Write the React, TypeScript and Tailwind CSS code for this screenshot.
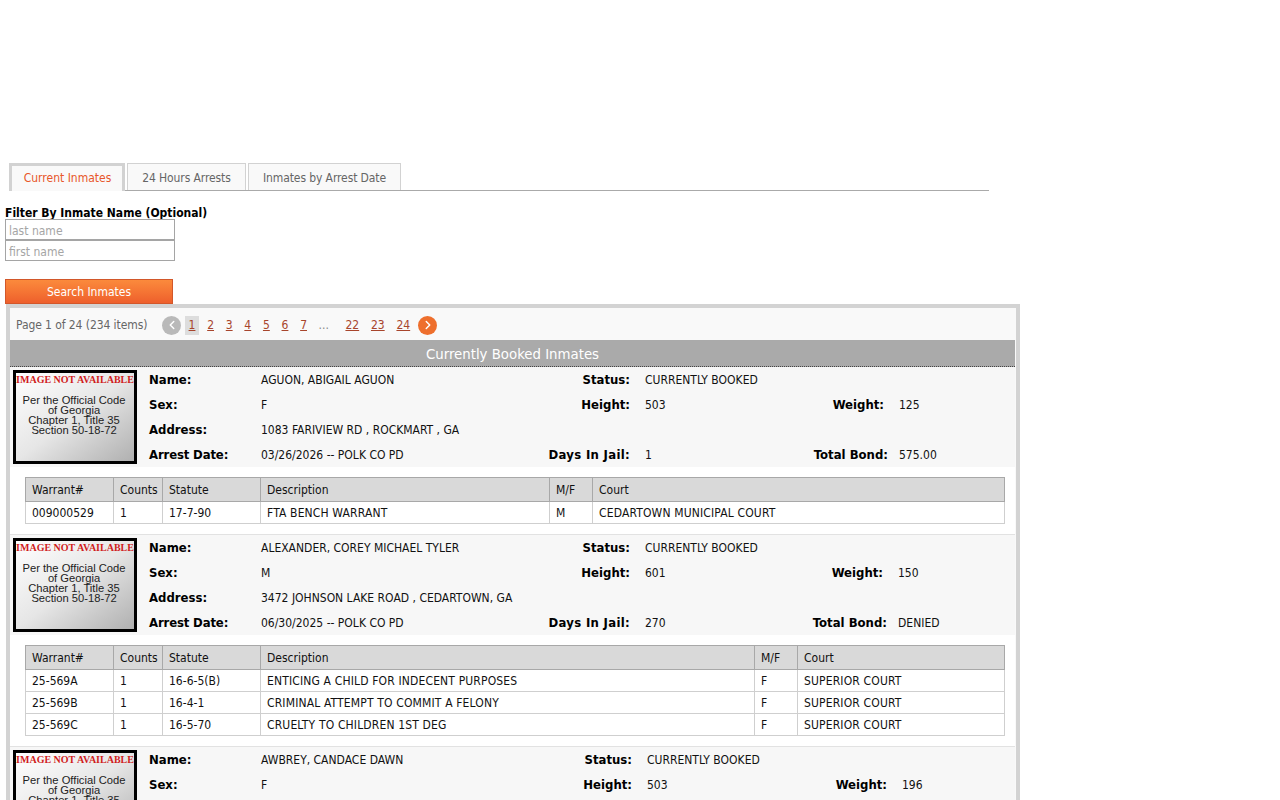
import { ChevronLeft, ChevronRight } from "lucide-react";

type Charge = { warrant: string; counts: string; statute: string; description: string; mf: string; court: string };

type Inmate = {
  name: string;
  sex: string;
  address: string;
  arrest: string;
  status: string;
  height: string;
  weight: string;
  days: string;
  bond: string;
  gridCols: string;
  descWidth: string;
  charges: Charge[];
};

const inmates: Inmate[] = [
  {
    name: "AGUON, ABIGAIL AGUON",
    sex: "F",
    address: "1083 FARIVIEW RD , ROCKMART , GA",
    arrest: "03/26/2026 -- POLK CO PD",
    status: "CURRENTLY BOOKED",
    height: "503",
    weight: "125",
    days: "1",
    bond: "575.00",
    gridCols: "grid-cols-[112px_269px_100px_15px_139px_100px_15px_100px]",
    descWidth: "w-[289px]",
    charges: [
      { warrant: "009000529", counts: "1", statute: "17-7-90", description: "FTA BENCH WARRANT", mf: "M", court: "CEDARTOWN MUNICIPAL COURT" },
    ],
  },
  {
    name: "ALEXANDER, COREY MICHAEL TYLER",
    sex: "M",
    address: "3472 JOHNSON LAKE ROAD , CEDARTOWN, GA",
    arrest: "06/30/2025 -- POLK CO PD",
    status: "CURRENTLY BOOKED",
    height: "601",
    weight: "150",
    days: "270",
    bond: "DENIED",
    gridCols: "grid-cols-[112px_269px_100px_15px_138px_100px_15px_100px]",
    descWidth: "w-[494px]",
    charges: [
      { warrant: "25-569A", counts: "1", statute: "16-6-5(B)", description: "ENTICING A CHILD FOR INDECENT PURPOSES", mf: "F", court: "SUPERIOR COURT" },
      { warrant: "25-569B", counts: "1", statute: "16-4-1", description: "CRIMINAL ATTEMPT TO COMMIT A FELONY", mf: "F", court: "SUPERIOR COURT" },
      { warrant: "25-569C", counts: "1", statute: "16-5-70", description: "CRUELTY TO CHILDREN 1ST DEG", mf: "F", court: "SUPERIOR COURT" },
    ],
  },
  {
    name: "AWBREY, CANDACE DAWN",
    sex: "F",
    address: "",
    arrest: "",
    status: "CURRENTLY BOOKED",
    height: "503",
    weight: "196",
    days: "",
    bond: "",
    gridCols: "grid-cols-[112px_271px_100px_15px_140px_100px_15px_100px]",
    descWidth: "w-[289px]",
    charges: [],
  },
];

const pages = ["1", "2", "3", "4", "5", "6", "7"];

function Label({ children, className = "" }: { children?: React.ReactNode; className?: string }) {
  return <div className={`font-['DejaVu_Sans',sans-serif] text-[13px] font-bold text-black ${className}`}>{children}</div>;
}

function NotAvailable() {
  return (
    <div className="mt-[3px] h-[94px] w-[124px] shrink-0 border-[3px] border-black bg-gradient-to-br from-white via-[#e6e6e6] to-[#b0b0b0] text-center">
      <div className="whitespace-nowrap font-['Liberation_Serif',serif] text-[10px] font-bold leading-[13px] text-[#d01c1c]">
        IMAGE NOT AVAILABLE
      </div>
      <div className="mr-[2px] mt-[9px] whitespace-nowrap font-['Liberation_Sans',sans-serif] text-[11.2px] leading-[10px] text-[#222]">
        Per the Official Code
        <br />
        of Georgia
        <br />
        Chapter 1, Title 35
        <br />
        Section 50-18-72
      </div>
    </div>
  );
}

function InmateRecord({ inmate }: { inmate: Inmate }) {
  return (
    <div>
      <div className="flex h-[100px] bg-[#f7f7f7] pl-[3px]">
        <NotAvailable />
        <div className={`ml-[12px] grid h-[100px] flex-1 grid-rows-4 items-center text-xs text-[#111] ${inmate.gridCols}`}>
          <Label>Name:</Label>
          <div>{inmate.name}</div>
          <Label className="text-right">Status:</Label>
          <div />
          <div>{inmate.status}</div>
          <div />
          <div />
          <div />

          <Label>Sex:</Label>
          <div>{inmate.sex}</div>
          <Label className="text-right">Height:</Label>
          <div />
          <div>{inmate.height}</div>
          <Label className="text-right">Weight:</Label>
          <div />
          <div>{inmate.weight}</div>

          <Label>Address:</Label>
          <div className="col-span-7">{inmate.address}</div>

          <Label className="tracking-[-0.15px]">Arrest Date:</Label>
          <div>{inmate.arrest}</div>
          <Label className="text-right tracking-[0.3px]">Days In Jail:</Label>
          <div />
          <div>{inmate.days}</div>
          <Label className="-mr-[4px] text-right">Total Bond:</Label>
          <div />
          <div>{inmate.bond}</div>
        </div>
      </div>
      <div className="border-b border-[#e2e2e2] bg-white px-[15px] pb-[10px] pt-[10px]">
        <table className="w-[980px] table-fixed border-collapse border border-[#a8a8a8] text-xs text-[#111]">
          <thead>
            <tr className="h-[24px] bg-[#d9d9d9] text-left">
              <th className="w-[88px] border border-[#a8a8a8] px-[6px] font-normal">Warrant#</th>
              <th className="w-[49px] border border-[#a8a8a8] px-[6px] font-normal">Counts</th>
              <th className="w-[98px] border border-[#a8a8a8] px-[6px] font-normal">Statute</th>
              <th className={`${inmate.descWidth} border border-[#a8a8a8] px-[6px] font-normal`}>Description</th>
              <th className="w-[43px] border border-[#a8a8a8] px-[6px] font-normal">M/F</th>
              <th className="border border-[#a8a8a8] px-[6px] font-normal">Court</th>
            </tr>
          </thead>
          <tbody>
            {inmate.charges.map((c) => (
              <tr key={c.warrant} className="h-[22px]">
                <td className="border border-[#cfcfcf] px-[6px]">{c.warrant}</td>
                <td className="border border-[#cfcfcf] px-[6px]">{c.counts}</td>
                <td className="border border-[#cfcfcf] px-[6px]">{c.statute}</td>
                <td className="border border-[#cfcfcf] px-[6px] tracking-[0.15px]">{c.description}</td>
                <td className="border border-[#cfcfcf] px-[6px]">{c.mf}</td>
                <td className="border border-[#cfcfcf] px-[6px] tracking-[0.15px]">{c.court}</td>
              </tr>
            ))}
          </tbody>
        </table>
      </div>
    </div>
  );
}

export default function App() {
  return (
    <div className="h-[800px] overflow-hidden bg-white pt-[163px] font-['DejaVu_Sans_Condensed','DejaVu_Sans',sans-serif] text-xs [font-stretch:condensed]">
      {/* Tabs */}
      <div className="ml-[9px] flex h-[28px] w-[980px] items-end gap-[2px] border-b border-[#aaaaaa]">
        <div className="-mb-px flex h-[28px] w-[116px] items-center justify-center border-[3px] border-b-0 border-[#d2d2d2] bg-[#f9f9f9] pb-[2px] pl-px text-[#e8572a]">
          Current Inmates
        </div>
        <div className="flex h-[27px] w-[119px] items-center justify-center border border-b-0 border-[#d2d2d2] bg-[#f9f9f9] pt-px tracking-[-0.1px] text-[#666]">
          24 Hours Arrests
        </div>
        <div className="flex h-[27px] w-[153px] items-center justify-center border border-b-0 border-[#d2d2d2] bg-[#f9f9f9] pt-px tracking-[-0.1px] text-[#666]">
          Inmates by Arrest Date
        </div>
      </div>

      {/* Filter */}
      <div className="ml-[5px] mt-[14px] flex flex-col">
        <div className="h-[14px] pt-px font-['DejaVu_Sans',sans-serif] text-xs font-bold leading-[14px] text-black">
          Filter By Inmate Name (Optional)
        </div>
        <input
          placeholder="last name"
          className="h-[21px] w-[170px] border border-[#a5a5a5] px-[3px] pt-[2px] text-xs outline-none placeholder:text-[#a5a5a5]"
        />
        <input
          placeholder="first name"
          className="h-[21px] w-[170px] border border-[#a5a5a5] px-[3px] pt-[2px] text-xs outline-none placeholder:text-[#a5a5a5]"
        />
        <button className="mt-[18px] h-[25px] w-[168px] border border-[#d2572a] bg-gradient-to-b from-[#fb8a3c] to-[#ee5f2c] text-xs text-white">
          Search Inmates
        </button>
      </div>

      {/* Results */}
      <div className="ml-[6px] w-[1014px] border-4 border-b-0 border-[#d3d3d3] bg-[#f9f9f9] pr-px">
        <div className="flex h-[32px] items-center pl-[6px] pt-[2px] text-[#666]">
          <span className="w-[146px] tracking-[-0.08px]">Page 1 of 24 (234 items)</span>
          <span className="flex h-[19px] w-[19px] items-center justify-center rounded-full bg-[#b9b9b9] text-white">
            <ChevronLeft size={14} strokeWidth={2.5} />
          </span>
          <div className="ml-[4px] flex items-center">
            {pages.map((p) => (
              <a
                key={p}
                className={`flex h-[19px] items-center justify-center text-[#a8452c] underline ${p === "1" ? "w-[14px] bg-[#dddddd]" : "ml-[4.6px] w-[14px]"}`}
              >
                {p}
              </a>
            ))}
            <span className="ml-[8px] w-[21px] text-[#888]">...</span>
            {["22", "23", "24"].map((p) => (
              <a key={p} className="flex h-[19px] w-[25.5px] items-center justify-center text-[#a8452c] underline">
                {p}
              </a>
            ))}
          </div>
          <span className="ml-[2px] flex h-[19px] w-[19px] items-center justify-center rounded-full bg-[#ee6f2d] text-white">
            <ChevronRight size={14} strokeWidth={2.5} />
          </span>
        </div>
        <div className="flex h-[27px] items-center justify-center border-b border-dotted border-[#444] bg-[#aaaaaa] pt-[2px] text-[14.8px] text-white">
          Currently Booked Inmates
        </div>
        {inmates.map((inmate) => (
          <InmateRecord key={inmate.name} inmate={inmate} />
        ))}
      </div>
    </div>
  );
}
